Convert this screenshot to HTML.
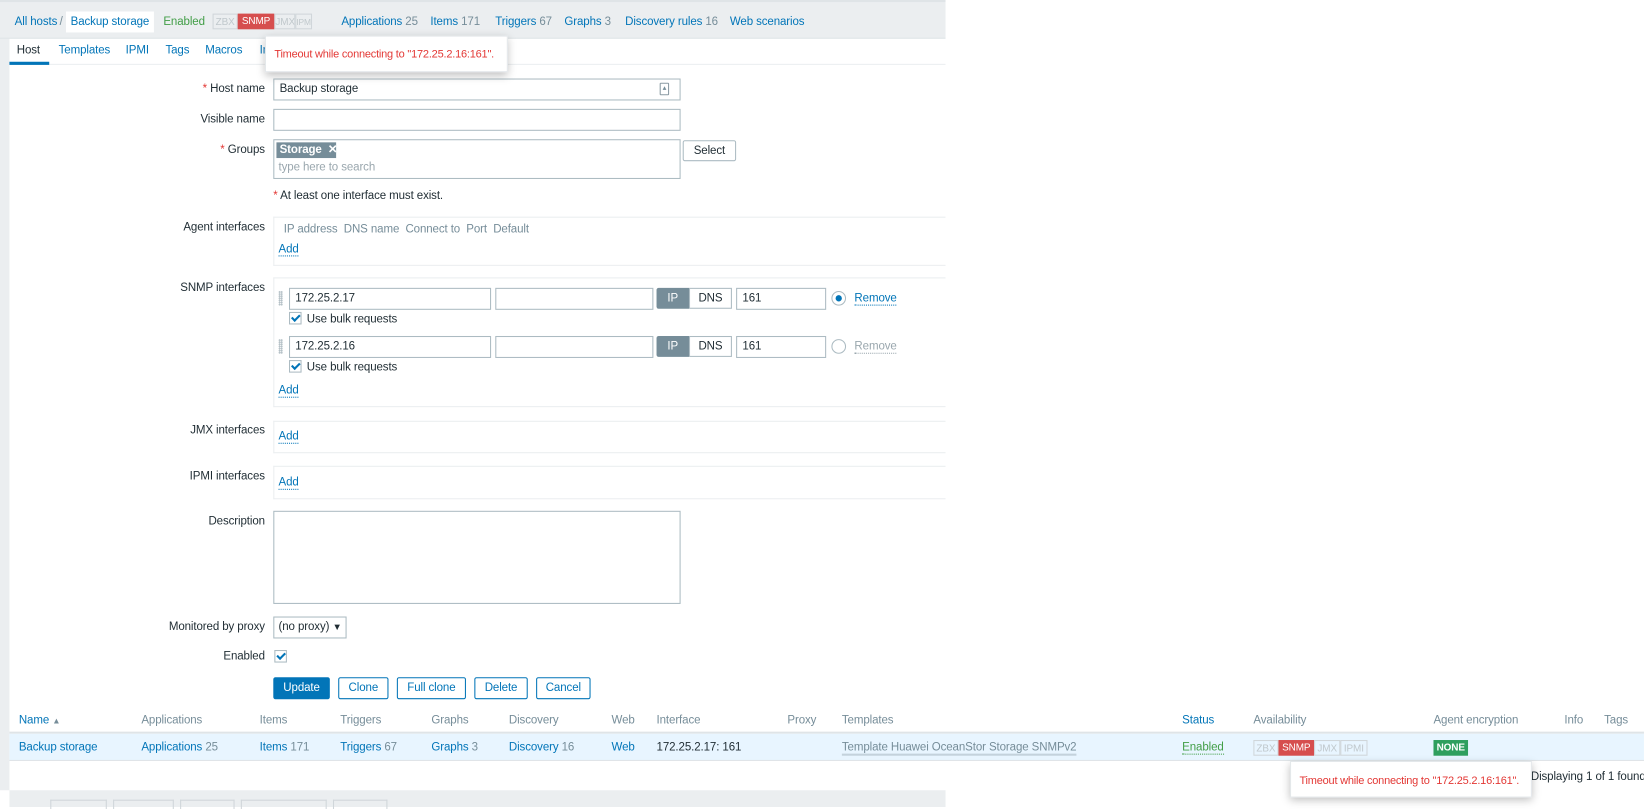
<!DOCTYPE html>
<html><head><meta charset="utf-8"><style>
html,body{margin:0;padding:0;width:1644px;height:807px;overflow:hidden;background:#fff;}
#w{position:absolute;left:0;top:0;width:1570px;height:771px;transform:scale(1.0471,1.0467);transform-origin:0 0;font-family:"Liberation Sans",Arial,sans-serif;font-size:11px;color:#1f2c33;letter-spacing:-0.1px;}
#w div{white-space:nowrap;}
.a{position:absolute;}
.l{color:#0275b8;}
.g{color:#768d99;}
.lbl{position:absolute;right:1317px;text-align:right;}
.req{color:#e33734;}
.in{position:absolute;border:1px solid #acbbc2;background:#fff;box-sizing:border-box;height:21px;padding-left:5px;line-height:19px;overflow:hidden;}
.box{position:absolute;left:261px;width:642px;border:1px solid #ebeef0;border-right:none;box-sizing:border-box;}
.btn{position:absolute;border:1px solid #0275b8;color:#0275b8;background:#fff;box-sizing:border-box;height:21px;line-height:19px;text-align:center;border-radius:2px;}
.ul{border-bottom:1px dotted #0275b8;}
.cb{position:absolute;width:12px;height:12px;border:1px solid #acbbc2;box-sizing:border-box;background:#fff;}
.cb:after{content:"";position:absolute;left:3px;top:0px;width:3px;height:6px;border:solid #0275b8;border-width:0 2px 2px 0;transform:rotate(45deg);}
.tip{position:absolute;background:#fff;box-shadow:0 3px 8px rgba(0,0,0,.25);border:1px solid #e3e7ea;color:#e33734;font-size:10.5px;letter-spacing:-0.2px;}
.st{position:absolute;top:13px;height:15px;line-height:15px;font-size:9.5px;text-align:center;box-sizing:border-box;overflow:hidden;}
.drag{position:absolute;width:4px;height:14px;background-image:radial-gradient(#b5c1c7 0.8px,transparent 1px);background-size:2px 2px;}
</style></head><body><div id="w">
<div class="a" style="left:0;top:0;width:9px;height:755px;background:#ebeef0"></div>
<div class="a" style="left:0;top:0;width:903px;height:37px;background:#ebeef0;border-top:2px solid #dfe4e7;box-sizing:border-box;border-bottom:1px solid #dfe4e7"></div>
<div class="a l" style="left:14px;top:15px">All hosts</div>
<div class="a" style="left:57px;top:15px;color:#768d99">/</div>
<div class="a l" style="left:63px;top:11px;width:84px;height:20px;background:#fff;line-height:20px;text-align:center">Backup storage</div>
<div class="a" style="left:156px;top:15px;color:#429e47">Enabled</div>
<div class="st" style="left:203px;width:24px;border:1px solid #d0d6da;color:#c0c8cc">ZBX</div>
<div class="st" style="left:227px;width:35px;background:#d64e4e;color:#fff">SNMP</div>
<div class="st" style="left:262px;width:20px;border:1px solid #d0d6da;color:#c0c8cc">JMX</div>
<div class="st" style="left:282px;width:16px;border:1px solid #d0d6da;color:#c0c8cc;font-size:8px">IPMI</div>
<div class="a l" style="left:326px;top:15px">Applications <span class="g">25</span></div>
<div class="a l" style="left:411px;top:15px">Items <span class="g">171</span></div>
<div class="a l" style="left:473px;top:15px">Triggers <span class="g">67</span></div>
<div class="a l" style="left:539px;top:15px">Graphs <span class="g">3</span></div>
<div class="a l" style="left:597px;top:15px">Discovery rules <span class="g">16</span></div>
<div class="a l" style="left:697px;top:15px">Web scenarios</div>
<div class="a" style="left:9px;top:37px;width:894px;height:25px;border-bottom:1px solid #ebeef0;box-sizing:border-box"></div>
<div class="a" style="left:16px;top:42px">Host</div>
<div class="a" style="left:9px;top:59px;width:38px;height:3px;background:#0275b8"></div>
<div class="a l" style="left:56px;top:42px">Templates</div>
<div class="a l" style="left:120px;top:42px">IPMI</div>
<div class="a l" style="left:158px;top:42px">Tags</div>
<div class="a l" style="left:196px;top:42px">Macros</div>
<div class="a l" style="left:248px;top:42px">In</div>
<div class="lbl" style="top:79px"><span class="req">*</span> Host name</div>
<div class="in" style="left:261px;top:75px;width:389px">Backup storage</div>
<div class="a" style="left:630px;top:79px;width:9px;height:12px;border:1px solid #8a9aa3;border-radius:1px;box-sizing:border-box;font-size:7px;line-height:10px;text-align:center;color:#768d99">▴</div>
<div class="lbl" style="top:108px">Visible name</div>
<div class="in" style="left:261px;top:104px;width:389px"></div>
<div class="lbl" style="top:137px"><span class="req">*</span> Groups</div>
<div class="in" style="left:261px;top:133px;width:389px;height:38px"></div>
<div class="a" style="left:264px;top:136px;width:57px;height:15px;background:#768d99;color:#fff;line-height:15px;padding-left:3px;box-sizing:border-box;font-weight:bold">Storage&nbsp; ✕</div>
<div class="a" style="left:266px;top:154px;color:#9aa7ae">type here to search</div>
<div class="a" style="left:652px;top:134px;width:51px;height:20px;border:1px solid #acbbc2;box-sizing:border-box;border-radius:2px;text-align:center;line-height:18px">Select</div>
<div class="a" style="left:261px;top:181px"><span class="req">*</span> At least one interface must exist.</div>
<div class="lbl" style="top:211px">Agent interfaces</div>
<div class="box" style="top:207px;height:47px"></div>
<div class="a g" style="left:271px;top:213px">IP address&nbsp; DNS name&nbsp; Connect to&nbsp; Port&nbsp; Default</div>
<div class="a l" style="left:266px;top:232px"><span class="ul">Add</span></div>
<div class="lbl" style="top:269px">SNMP interfaces</div>
<div class="box" style="top:265px;height:124px"></div>
<div class="drag" style="left:266px;top:278px"></div>
<div class="in" style="left:276px;top:275px;width:193px">172.25.2.17</div>
<div class="in" style="left:473px;top:275px;width:151px"></div>
<div class="a" style="left:627px;top:275px;width:31px;height:20px;background:#768d99;color:#fff;text-align:center;line-height:20px;border-radius:2px 0 0 2px">IP</div>
<div class="a" style="left:658px;top:275px;width:41px;height:20px;border:1px solid #acbbc2;box-sizing:border-box;text-align:center;line-height:18px">DNS</div>
<div class="in" style="left:703px;top:275px;width:86px">161</div>
<div class="a" style="left:794px;top:278px;width:14px;height:14px;border:1px solid #acbbc2;border-radius:50%;box-sizing:border-box"></div>
<div class="a" style="left:798px;top:282px;width:6px;height:6px;background:#0275b8;border-radius:50%"></div>
<div class="a l" style="left:816px;top:279px"><span class="ul">Remove</span></div>
<div class="cb" style="left:276px;top:298px"></div>
<div class="a" style="left:293px;top:299px">Use bulk requests</div>
<div class="drag" style="left:266px;top:324px"></div>
<div class="in" style="left:276px;top:321px;width:193px">172.25.2.16</div>
<div class="in" style="left:473px;top:321px;width:151px"></div>
<div class="a" style="left:627px;top:321px;width:31px;height:20px;background:#768d99;color:#fff;text-align:center;line-height:20px;border-radius:2px 0 0 2px">IP</div>
<div class="a" style="left:658px;top:321px;width:41px;height:20px;border:1px solid #acbbc2;box-sizing:border-box;text-align:center;line-height:18px">DNS</div>
<div class="in" style="left:703px;top:321px;width:86px">161</div>
<div class="a" style="left:794px;top:324px;width:14px;height:14px;border:1px solid #acbbc2;border-radius:50%;box-sizing:border-box"></div>
<div class="a" style="left:816px;top:325px;color:#9aa7ae"><span style="border-bottom:1px dotted #9aa7ae">Remove</span></div>
<div class="cb" style="left:276px;top:344px"></div>
<div class="a" style="left:293px;top:345px">Use bulk requests</div>
<div class="a l" style="left:266px;top:367px"><span class="ul">Add</span></div>
<div class="lbl" style="top:405px">JMX interfaces</div>
<div class="box" style="top:402px;height:31px"></div>
<div class="a l" style="left:266px;top:411px"><span class="ul">Add</span></div>
<div class="lbl" style="top:449px">IPMI interfaces</div>
<div class="box" style="top:445px;height:32px"></div>
<div class="a l" style="left:266px;top:455px"><span class="ul">Add</span></div>
<div class="lbl" style="top:492px">Description</div>
<div class="in" style="left:261px;top:488px;width:389px;height:89px"></div>
<div class="lbl" style="top:593px">Monitored by proxy</div>
<div class="in" style="left:261px;top:589px;width:70px;padding-left:4px">(no proxy)&nbsp;<span style="font-size:9px">▼</span></div>
<div class="lbl" style="top:621px">Enabled</div>
<div class="cb" style="left:262px;top:621px"></div>
<div class="btn" style="left:261px;top:647px;width:54px;background:#0275b8;color:#fff">Update</div>
<div class="btn" style="left:323px;top:647px;width:48px">Clone</div>
<div class="btn" style="left:379px;top:647px;width:66px">Full clone</div>
<div class="btn" style="left:453px;top:647px;width:51px">Delete</div>
<div class="btn" style="left:512px;top:647px;width:52px">Cancel</div>
<div class="a" style="left:9px;top:699px;width:1561px;height:2px;background:#dfe4e7"></div>
<div class="a" style="left:9px;top:701px;width:1561px;height:26px;background:#e8f5ff;border-bottom:1px solid #dfe4e7;box-sizing:border-box"></div>
<div class="a l" style="left:18px;top:682px">Name <span style="font-size:8px;color:#768d99">▲</span></div>
<div class="a g" style="left:135px;top:682px">Applications</div>
<div class="a g" style="left:248px;top:682px">Items</div>
<div class="a g" style="left:325px;top:682px">Triggers</div>
<div class="a g" style="left:412px;top:682px">Graphs</div>
<div class="a g" style="left:486px;top:682px">Discovery</div>
<div class="a g" style="left:584px;top:682px">Web</div>
<div class="a g" style="left:627px;top:682px">Interface</div>
<div class="a g" style="left:752px;top:682px">Proxy</div>
<div class="a g" style="left:804px;top:682px">Templates</div>
<div class="a l" style="left:1129px;top:682px">Status</div>
<div class="a g" style="left:1197px;top:682px">Availability</div>
<div class="a g" style="left:1369px;top:682px">Agent encryption</div>
<div class="a g" style="left:1494px;top:682px">Info</div>
<div class="a g" style="left:1532px;top:682px">Tags</div>
<div class="a l" style="left:18px;top:708px">Backup storage</div>
<div class="a l" style="left:135px;top:708px">Applications <span class="g">25</span></div>
<div class="a l" style="left:248px;top:708px">Items <span class="g">171</span></div>
<div class="a l" style="left:325px;top:708px">Triggers <span class="g">67</span></div>
<div class="a l" style="left:412px;top:708px">Graphs <span class="g">3</span></div>
<div class="a l" style="left:486px;top:708px">Discovery <span class="g">16</span></div>
<div class="a l" style="left:584px;top:708px">Web</div>
<div class="a" style="left:627px;top:708px">172.25.2.17: 161</div>
<div class="a g" style="left:804px;top:708px"><span style="border-bottom:2px solid #c4d2dc">Template Huawei OceanStor Storage SNMPv2</span></div>
<div class="a" style="left:1129px;top:708px;color:#429e47"><span style="border-bottom:1px dotted #429e47">Enabled</span></div>
<div class="st" style="top:707px;left:1197px;width:24px;border:1px solid #d0d6da;color:#c0c8cc">ZBX</div>
<div class="st" style="top:707px;left:1221px;width:34px;background:#d64e4e;color:#fff">SNMP</div>
<div class="st" style="top:707px;left:1255px;width:25px;border:1px solid #d0d6da;color:#c0c8cc">JMX</div>
<div class="st" style="top:707px;left:1280px;width:26px;border:1px solid #d0d6da;color:#c0c8cc">IPMI</div>
<div class="st" style="top:707px;left:1369px;width:33px;background:#2f9f5e;color:#fff;font-weight:bold">NONE</div>
<div class="a" style="left:1462px;top:736px;color:#1f2c33">Displaying 1 of 1 found</div>
<div class="a" style="left:9px;top:755px;width:894px;height:16px;background:#ebeef0"></div>
<div class="a" style="left:48px;top:764px;width:52px;height:8px;border:1px solid #d0d6da;border-bottom:none"></div>
<div class="a" style="left:108px;top:764px;width:56px;height:8px;border:1px solid #d0d6da;border-bottom:none"></div>
<div class="a" style="left:172px;top:764px;width:50px;height:8px;border:1px solid #d0d6da;border-bottom:none"></div>
<div class="a" style="left:230px;top:764px;width:80px;height:8px;border:1px solid #d0d6da;border-bottom:none"></div>
<div class="a" style="left:318px;top:764px;width:50px;height:8px;border:1px solid #d0d6da;border-bottom:none"></div>
<div class="tip" style="left:253px;top:34px;width:232px;height:35px;line-height:35px;padding-left:8px;box-sizing:border-box">Timeout while connecting to "172.25.2.16:161".</div>
<div class="tip" style="left:1232px;top:727px;width:231px;height:35px;line-height:37px;padding-left:8px;box-sizing:border-box">Timeout while connecting to "172.25.2.16:161".</div>
</div></body></html>
